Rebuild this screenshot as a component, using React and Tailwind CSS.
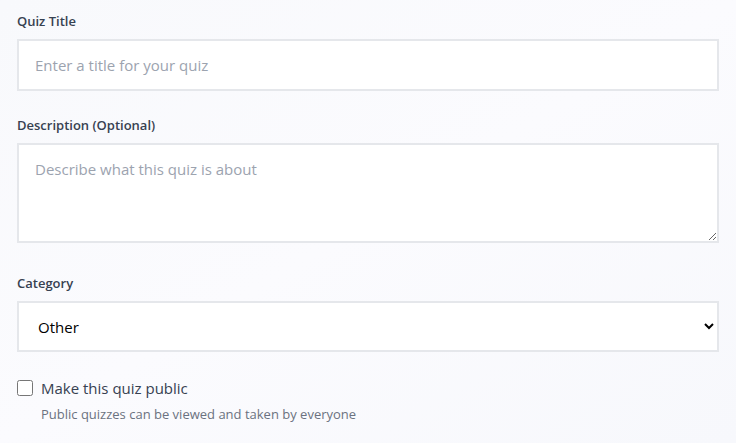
import React from "react";

export default function App() {
  return (
    <div
      className="w-[736px] h-[443px] overflow-hidden bg-gradient-to-br from-[#f8f9fc] via-[#fbfbfe] to-[#f7f8fc] px-[17px] pt-[11px]"
      style={{ fontFamily: '"Open Sans", "Noto Sans", sans-serif' }}
    >
      <div className="flex flex-col">
        <label className="text-[13px] leading-[20px] font-semibold text-[#374151]">Quiz Title</label>
        <input
          type="text"
          placeholder="Enter a title for your quiz"
          className="mt-2 h-[52px] w-[702px] border-2 border-[#e5e7eb] bg-white px-4 text-[15px] text-[#111827] placeholder:text-[#9ca3af] outline-none"
        />

        <label className="mt-6 text-[13px] leading-[20px] font-semibold text-[#374151]">Description (Optional)</label>
        <textarea
          placeholder="Describe what this quiz is about"
          className="mt-2 h-[100px] w-[702px] border-2 border-[#e5e7eb] bg-white px-4 py-[13px] text-[15px] leading-[22px] text-[#111827] placeholder:text-[#9ca3af] outline-none"
        />

        <label className="mt-[30px] text-[13px] leading-[20px] font-semibold text-[#374151]">Category</label>
        <select
          defaultValue="Other"
          className="mt-2 h-[51px] w-[702px] border-2 border-[#e5e7eb] bg-white px-[15px] text-[15px] text-black outline-none"
        >
          <option>General Knowledge</option>
          <option>Science</option>
          <option>History</option>
          <option>Other</option>
        </select>

        <div className="mt-[25px] flex items-center gap-2">
          <input type="checkbox" className="h-4 w-4 rounded-[3px]" />
          <span className="text-[15px] leading-[22px] text-[#374151]">Make this quiz public</span>
        </div>
        <p className="ml-6 mt-[6px] text-[13px] leading-[18px] text-[#6b7280]">
          Public quizzes can be viewed and taken by everyone
        </p>
      </div>
    </div>
  );
}
